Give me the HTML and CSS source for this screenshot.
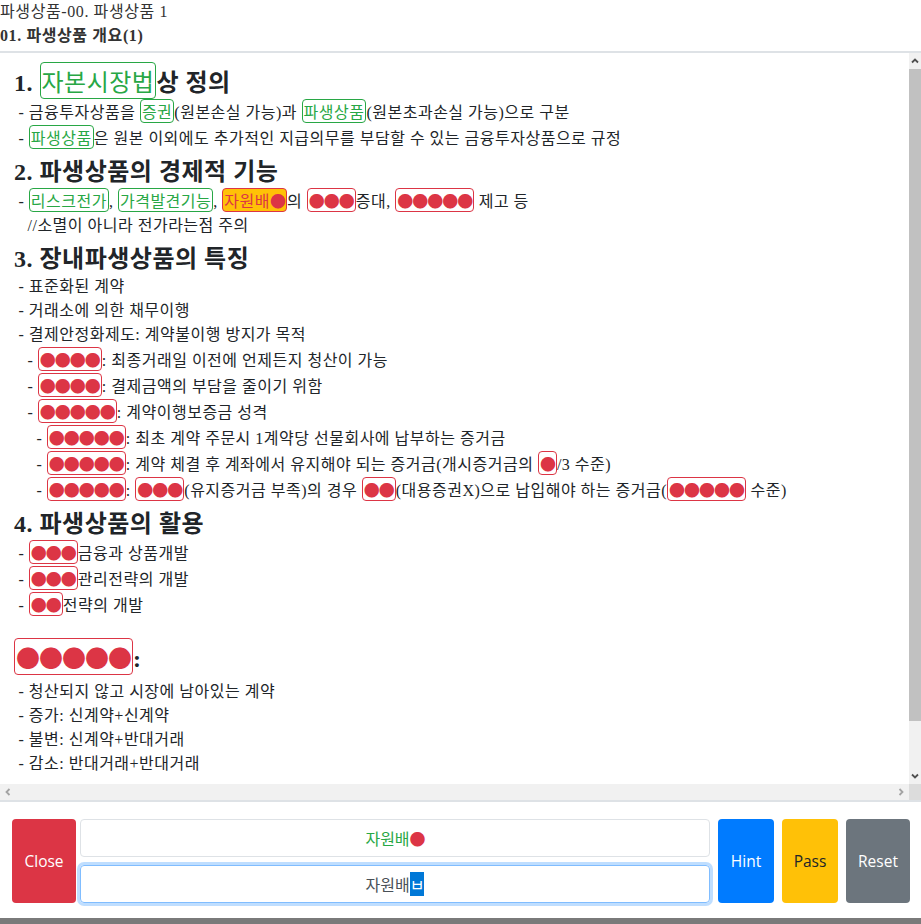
FILE: index.html
```html
<!DOCTYPE html>
<html lang="ko">
<head>
    <meta charset="UTF-8">
    <meta name="viewport" content="width=device-width, initial-scale=1.0">
    <title>파생상품 개요</title>
    <link rel="stylesheet" href="styles.css">
</head>
<body>
    <div class="head">
        <div class="title">파생상품-00. 파생상품 1</div>
        <div class="title sub">01. 파생상품 개요(1)</div>
    </div>

    <div class="viewer">
        <div class="content">
            <h3 class="sec">1. <span class="ans ok">자본시장법</span>상 정의</h3>
            <p class="ln"> - 금융투자상품을 <span class="ans ok">증권</span>(원본손실 가능)과 <span class="ans ok">파생상품</span>(원본초과손실 가능)으로 구분</p>
            <p class="ln"> - <span class="ans ok">파생상품</span>은 원본 이외에도 추가적인 지급의무를 부담할 수 있는 금융투자상품으로 규정</p>

            <h3 class="sec">2. 파생상품의 경제적 기능</h3>
            <p class="ln"> - <span class="ans ok">리스크전가</span>, <span class="ans ok">가격발견기능</span>, <span class="ans cur">자원배<i class="dot">●</i></span>의 <span class="ans hide">●●●</span>증대, <span class="ans hide">●●●●●</span> 제고 등</p>
            <p class="ln">   //소멸이 아니라 전가라는점 주의</p>

            <h3 class="sec">3. 장내파생상품의 특징</h3>
            <p class="ln"> - 표준화된 계약</p>
            <p class="ln"> - 거래소에 의한 채무이행</p>
            <p class="ln"> - 결제안정화제도: 계약불이행 방지가 목적</p>
            <p class="ln">   - <span class="ans hide">●●●●</span>: 최종거래일 이전에 언제든지 청산이 가능</p>
            <p class="ln">   - <span class="ans hide">●●●●</span>: 결제금액의 부담을 줄이기 위함</p>
            <p class="ln">   - <span class="ans hide">●●●●●</span>: 계약이행보증금 성격</p>
            <p class="ln">     - <span class="ans hide">●●●●●</span>: 최초 계약 주문시 1계약당 선물회사에 납부하는 증거금</p>
            <p class="ln">     - <span class="ans hide">●●●●●</span>: 계약 체결 후 계좌에서 유지해야 되는 증거금(개시증거금의 <span class="ans hide">●</span>/3 수준)</p>
            <p class="ln">     - <span class="ans hide">●●●●●</span>: <span class="ans hide">●●●</span>(유지증거금 부족)의 경우 <span class="ans hide">●●</span>(대용증권X)으로 납입해야 하는 증거금(<span class="ans hide">●●●●●</span> 수준)</p>

            <h3 class="sec">4. 파생상품의 활용</h3>
            <p class="ln"> - <span class="ans hide">●●●</span>금융과 상품개발</p>
            <p class="ln"> - <span class="ans hide">●●●</span>관리전략의 개발</p>
            <p class="ln"> - <span class="ans hide">●●</span>전략의 개발</p>
            <div class="spacer"></div>

            <h3 class="sec big"><span class="ans hide">●●●●●</span>:</h3>
            <p class="ln"> - 청산되지 않고 시장에 남아있는 계약</p>
            <p class="ln"> - 증가: 신계약+신계약</p>
            <p class="ln"> - 불변: 신계약+반대거래</p>
            <p class="ln"> - 감소: 반대거래+반대거래</p>
        </div>

        <div class="vbar">
            <span class="sb-btn">
                <svg viewBox="0 0 12 12"><polyline points="3,7.5 6,4.5 9,7.5"/></svg>
            </span>
            <span class="thumb"></span>
            <span class="sb-btn">
                <svg viewBox="0 0 12 12"><polyline points="3,4.5 6,7.5 9,4.5"/></svg>
            </span>
        </div>
        <div class="hbar">
            <span class="sb-btn off">
                <svg viewBox="0 0 12 12"><polyline points="7.5,3 4.5,6 7.5,9"/></svg>
            </span>
            <span class="sb-btn off">
                <svg viewBox="0 0 12 12"><polyline points="4.5,3 7.5,6 4.5,9"/></svg>
            </span>
        </div>
        <div class="corner"></div>
    </div>

    <div class="panel">
        <button class="btn btn-red">Close</button>
        <div class="fields">
            <div class="field hint-text">자원배<i class="dot">●</i></div>
            <div class="field focus">자원배<span class="ime">ㅂ</span></div>
        </div>
        <button class="btn btn-blue">Hint</button>
        <button class="btn btn-yellow">Pass</button>
        <button class="btn btn-gray">Reset</button>
    </div>

    <div class="bottom-bar"></div>
</body>
</html>
```

FILE: styles.css
```css
html, body {
    height: 100%;
}

body {
    font-family: "Liberation Serif", "Noto Sans CJK KR", serif;
    color: #212529;
    margin: 0;
    padding: 0;
    display: flex;
    flex-direction: column;
    height: 100vh;
    overflow: hidden;
    background-color: #fff;
}

.head {
    padding-bottom: 3px;
    border-bottom: 2px solid #dee2e6;
    letter-spacing: 0.6px;
}

.title {
    font-size: 16px;
    line-height: 24px;
    color: #333;
}

.title.sub {
    font-weight: bold;
}

/* scroll area with fake scrollbars */
.viewer {
    flex: 1;
    min-height: 0;
    display: grid;
    grid-template-columns: 1fr 12px;
    grid-template-rows: 1fr 16px;
}

.content {
    overflow: hidden;
    padding: 9px 0 0 14px;
    letter-spacing: 0.5px;
}

.sec {
    font-size: 24px;
    line-height: 32px;
    font-weight: bold;
    margin: 5px 0 0 0;
}

.sec:first-child {
    margin-top: 0;
}

.sec.big {
    margin: 0 0 5px 0;
}

.ln {
    margin: 0;
    font-size: 16px;
    line-height: 24px;
    white-space: pre;
}

.spacer {
    height: 20px;
}

.ans {
    display: inline-block;
    border: 1px solid;
    border-radius: 4px;
    padding: 0 1px;
    line-height: 22px;
    font-weight: normal;
    font-family: "Noto Sans CJK KR", sans-serif;
}

.sec .ans {
    line-height: 35px;
}

.ans.ok {
    color: #28a745;
    border-color: #28a745;
}

.ans.hide {
    color: #dc3545;
    border-color: #dc3545;
    letter-spacing: -1px;
}

.ans.cur {
    color: #dc3545;
    border-color: #dc3545;
    background-color: #ffc107;
}

.dot {
    font-style: normal;
    color: #dc3545;
    letter-spacing: -1px;
}

.vbar {
    background-color: #f1f1f1;
    display: flex;
    flex-direction: column;
}

.thumb {
    background-color: #c1c1c1;
    height: 652px;
}

.sb-btn {
    width: 12px;
    height: 16px;
    display: flex;
    align-items: center;
    justify-content: center;
}

.vbar .sb-btn:last-child {
    margin-top: auto;
}

.sb-btn svg {
    width: 12px;
    height: 12px;
    fill: none;
    stroke: #505050;
    stroke-width: 1.8;
}

.sb-btn.off svg {
    stroke: #a3a3a3;
}

.hbar {
    background-color: #f1f1f1;
    display: flex;
    justify-content: space-between;
    align-items: center;
    padding: 0 2px;
}

.corner {
    background-color: #dcdcdc;
}

/* answer panel */
.panel {
    border-top: 2px solid #dee2e6;
    padding: 17px 11px 15px 12px;
    display: flex;
    align-items: stretch;
}

.btn {
    border: none;
    border-radius: 4px;
    color: #fff;
    font-family: "Open Sans", "Noto Sans", sans-serif;
    font-size: 15.5px;
    padding: 0;
    cursor: pointer;
}

.btn-red {
    width: 64px;
    background-color: #dc3545;
    margin-right: 4px;
}

.btn-blue {
    width: 56px;
    background-color: #007bff;
    margin-left: 8px;
}

.btn-yellow {
    width: 56px;
    background-color: #ffc107;
    color: #212529;
    margin-left: 8px;
}

.btn-gray {
    width: 64px;
    background-color: #6c757d;
    margin-left: 8px;
}

.fields {
    flex: 1;
    display: flex;
    flex-direction: column;
    gap: 8px;
}

.field {
    height: 38px;
    box-sizing: border-box;
    border: 1px solid #ced4da;
    border-radius: 4px;
    display: flex;
    align-items: center;
    justify-content: center;
    font-family: "Noto Sans CJK KR", sans-serif;
    font-size: 16px;
    color: #495057;
}

.field.hint-text {
    color: #28a745;
    border-color: #dee2e6;
}

.field.focus {
    border-color: #80bdff;
    box-shadow: 0 0 0 3px rgba(0, 123, 255, 0.25);
}

.ime {
    background-color: #0078d7;
    color: #fff;
}

.bottom-bar {
    height: 6px;
    background-color: #7a7a7a;
}
```
